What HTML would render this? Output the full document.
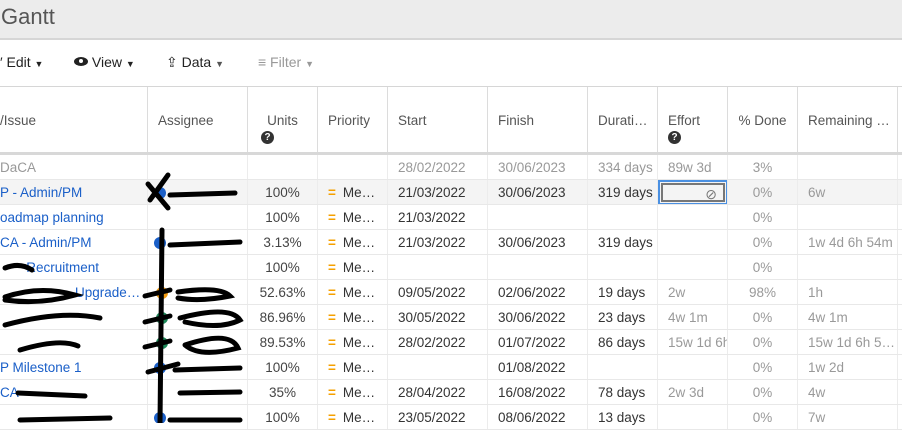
<!DOCTYPE html>
<html><head><meta charset="utf-8"><style>
*{box-sizing:border-box;margin:0;padding:0}
body{width:902px;height:423px;overflow:hidden;background:#fff;font-family:"Liberation Sans",sans-serif;font-size:13.5px;color:#333;position:relative}
.title{position:absolute;left:0;top:0;width:902px;height:40px;background:#ececec;border-bottom:2px solid #d6d6d6;font-size:22px;color:#555;padding:4px 0 0 1px}
.tb{position:absolute;top:54px;font-size:14px;color:#222}
.hdr{position:absolute;left:0;top:86px;width:902px;height:69px;border-top:1px solid #d6d6d6;border-bottom:3px solid #d8d8d8}
.c{position:absolute;top:0;height:100%;border-right:1px solid #dcdcdc;white-space:pre;overflow:hidden;padding-left:10px}
.hdr .c{padding-top:26px;color:#555;font-size:13.5px}
.row{position:absolute;left:0;width:902px;height:25px;border-bottom:1px solid #e8e8e8}
.row .c{line-height:26px;border-right:1px solid #ececec}
.q{display:inline-block;width:13px;height:13px;border-radius:50%;background:#333;color:#fff;font-size:10px;font-weight:bold;text-align:center;line-height:13px;margin-top:3px}
.blue{color:#1a5fc8}.g{color:#999}.ctr{text-align:center;padding-left:0!important}
.pr{color:#f5a000;font-weight:bold;margin-right:7px}
</style></head><body>
<div class="title">Gantt</div>
<div class="tb" style="left:0">&#x2032; Edit <span style="font-size:9px">▼</span></div>
<div class="tb" style="left:74px"><span style="display:inline-block;width:14px;height:9px;border-radius:50%;background:#222;vertical-align:1px;position:relative"><span style="position:absolute;left:5px;top:2px;width:4px;height:4px;background:#fff;border-radius:50%"></span></span> View <span style="font-size:9px">▼</span></div>
<div class="tb" style="left:166px">⇪ Data <span style="font-size:9px;color:#555">▼</span></div>
<div class="tb" style="left:258px;color:#999">≡ Filter <span style="font-size:9px">▼</span></div>
<div class="hdr">
<div class="c" style="left:0;width:148px;padding-left:0">/Issue</div>
<div class="c" style="left:148px;width:100px">Assignee</div>
<div class="c ctr" style="left:248px;width:70px">Units<br><span class="q" style="margin-left:-30px">?</span></div>
<div class="c" style="left:318px;width:70px">Priority</div>
<div class="c" style="left:388px;width:100px">Start</div>
<div class="c" style="left:488px;width:100px">Finish</div>
<div class="c" style="left:588px;width:70px">Durati…</div>
<div class="c" style="left:658px;width:70px">Effort<br><span class="q">?</span></div>
<div class="c ctr" style="left:728px;width:70px">% Done</div>
<div class="c" style="left:798px;width:100px">Remaining …</div>
</div>
<div id="rows"></div>
<script>
var L=[0,148,248,318,388,488,588,658,728,798],W=[148,100,70,70,100,100,70,70,70,100];
var R=[
["DaCA","","","","28/02/2022","30/06/2023","334 days","89w 3d","3%","",1],
["P - Admin/PM","","100%","Me…","21/03/2022","30/06/2023","319 days","","0%","6w",2],
["oadmap planning","","100%","Me…","21/03/2022","","","","0%",""],
["CA - Admin/PM","","3.13%","Me…","21/03/2022","30/06/2023","319 days","","0%","1w 4d 6h 54m"],
["       Recruitment","","100%","Me…","","","","","0%",""],
["                    Upgrade…","","52.63%","Me…","09/05/2022","02/06/2022","19 days","2w","98%","1h"],
["","","86.96%","Me…","30/05/2022","30/06/2022","23 days","4w 1m","0%","4w 1m"],
["","","89.53%","Me…","28/02/2022","01/07/2022","86 days","15w 1d 6h","0%","15w 1d 6h 5…"],
["P Milestone 1","","100%","Me…","","01/08/2022","","","0%","1w 2d"],
["CA","","35%","Me…","28/04/2022","16/08/2022","78 days","2w 3d","0%","4w"],
["","","100%","Me…","23/05/2022","08/06/2022","13 days","","0%","7w"]];
var h="";
R.forEach(function(r,i){var t=155+i*25;var bg=r[10]==2?"background:#f4f4f4;":"";
h+='<div class="row" style="top:'+t+'px;'+bg+'">';
for(var j=0;j<10;j++){var cls="c",s="left:"+L[j]+"px;width:"+W[j]+"px;",v=r[j];
if(j==0){cls+=r[10]==1?" g":" blue";s+="padding-left:0;";}
if(j==2||j==8)cls+=" ctr";
if(j==7||j==8||j==9)cls+=" g";
if(r[10]==1&&j>3)cls+=" g";
if(j==2)s+="color:#444;";
if(j==3&&v)v='<span class="pr">=</span>'+v;
if(j==7&&r[10]==2)v='<div style="position:absolute;left:0;top:0;width:70px;height:25px;border:2px solid #4a90e2"><div style="position:absolute;left:1px;top:1px;right:1px;bottom:1px;border:2px solid #777"></div><span style="position:absolute;right:9px;top:-1px;color:#777;font-size:14px">⊘</span></div>';
h+='<div class="'+cls+'" style="'+s+'">'+v+'</div>';}
h+='</div>';});
document.getElementById("rows").innerHTML=h;
</script>
<svg style="position:absolute;left:0;top:0" width="902" height="423">
<g fill="#1a5fc8"><circle cx="160" cy="193" r="6"/><circle cx="160" cy="243" r="6"/><circle cx="160" cy="368" r="6"/><circle cx="160" cy="418" r="6"/></g>
<circle cx="162" cy="293" r="6" fill="#f39c12"/><circle cx="162" cy="318" r="6" fill="#1e8a5a"/><circle cx="162" cy="343" r="6" fill="#1e8a5a"/>
<g stroke="#000" stroke-width="5" fill="none" stroke-linecap="round">
<path d="M162 230 L160 423"/><path d="M150 200 L168 175"/><path d="M148 184 L168 208"/>
<path d="M170 195 L235 193"/><path d="M170 245 L240 242"/>
<path d="M5 268 Q20 262 32 270"/><path d="M145 296 L170 290"/><path d="M178 292 Q220 286 230 296 Q200 302 178 298"/>
<path d="M5 297 Q40 285 75 295 Q40 305 5 300"/>
<path d="M145 322 L170 316"/><path d="M180 318 Q230 305 240 320 Q220 330 185 322"/><path d="M5 325 Q60 310 100 318"/>
<path d="M145 347 L170 341"/><path d="M185 345 Q230 330 238 348 Q200 358 185 345"/><path d="M20 350 Q60 338 78 346"/>
<path d="M148 372 L178 364"/><path d="M175 370 L240 368"/><path d="M18 393 L85 396"/><path d="M180 393 L240 392"/>
<path d="M20 420 L110 418"/><path d="M170 420 L240 420"/>
</g></svg>
</body></html>
